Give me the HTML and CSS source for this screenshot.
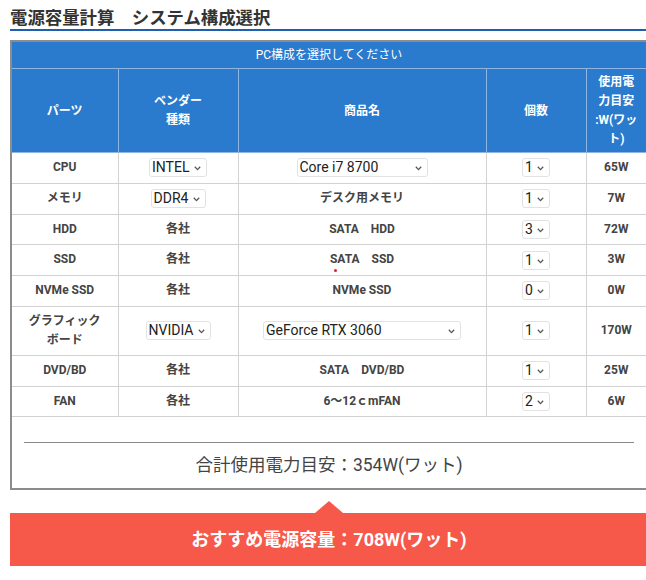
FILE: index.html
```html
<!DOCTYPE html>
<html lang="ja">
<head>
<meta charset="utf-8">
<title>電源容量計算</title>
<link rel="stylesheet" href="styles.css">
</head>
<body>
<div class="page">
  <h2 class="title">電源容量計算　システム構成選択</h2>
  <div class="calc">
    <table class="parts">
      <colgroup>
        <col class="c-part"><col class="c-vendor"><col class="c-name"><col class="c-qty"><col class="c-watt">
      </colgroup>
      <thead>
        <tr><th colspan="5" class="caption-cell">PC構成を選択してください</th></tr>
        <tr class="head">
          <th>パーツ</th>
          <th>ベンダー<br>種類</th>
          <th>商品名</th>
          <th>個数</th>
          <th class="watt-head">使用電<br>力目安<br>:W(ワッ<br>ト)</th>
        </tr>
      </thead>
      <tbody>
        <tr>
          <td>CPU</td>
          <td><span class="sel"><select><option>INTEL</option><option>AMD</option></select><svg width="7" height="5" viewBox="0 0 7 5"><path d="M0.8 0.8L3.5 3.6L6.2 0.8" fill="none" stroke="#555" stroke-width="1.3"/></svg></span></td>
          <td><span class="sel"><select class="w-cpu"><option>Core i7 8700</option><option>Core i5 8400</option></select><svg width="7" height="5" viewBox="0 0 7 5"><path d="M0.8 0.8L3.5 3.6L6.2 0.8" fill="none" stroke="#555" stroke-width="1.3"/></svg></span></td>
          <td><span class="sel"><select><option>1</option><option>2</option></select><svg width="7" height="5" viewBox="0 0 7 5"><path d="M0.8 0.8L3.5 3.6L6.2 0.8" fill="none" stroke="#555" stroke-width="1.3"/></svg></span></td>
          <td>65W</td>
        </tr>
        <tr>
          <td>メモリ</td>
          <td><span class="sel"><select><option>DDR4</option><option>DDR3</option></select><svg width="7" height="5" viewBox="0 0 7 5"><path d="M0.8 0.8L3.5 3.6L6.2 0.8" fill="none" stroke="#555" stroke-width="1.3"/></svg></span></td>
          <td>デスク用メモリ</td>
          <td><span class="sel"><select><option>1</option><option>2</option></select><svg width="7" height="5" viewBox="0 0 7 5"><path d="M0.8 0.8L3.5 3.6L6.2 0.8" fill="none" stroke="#555" stroke-width="1.3"/></svg></span></td>
          <td>7W</td>
        </tr>
        <tr>
          <td>HDD</td>
          <td>各社</td>
          <td>SATA　HDD</td>
          <td><span class="sel"><select><option>3</option><option>1</option></select><svg width="7" height="5" viewBox="0 0 7 5"><path d="M0.8 0.8L3.5 3.6L6.2 0.8" fill="none" stroke="#555" stroke-width="1.3"/></svg></span></td>
          <td>72W</td>
        </tr>
        <tr>
          <td>SSD</td>
          <td>各社</td>
          <td class="dotcell">SATA　SSD<span class="dot"></span></td>
          <td><span class="sel"><select><option>1</option><option>2</option></select><svg width="7" height="5" viewBox="0 0 7 5"><path d="M0.8 0.8L3.5 3.6L6.2 0.8" fill="none" stroke="#555" stroke-width="1.3"/></svg></span></td>
          <td>3W</td>
        </tr>
        <tr>
          <td>NVMe SSD</td>
          <td>各社</td>
          <td>NVMe SSD</td>
          <td><span class="sel"><select><option>0</option><option>1</option></select><svg width="7" height="5" viewBox="0 0 7 5"><path d="M0.8 0.8L3.5 3.6L6.2 0.8" fill="none" stroke="#555" stroke-width="1.3"/></svg></span></td>
          <td>0W</td>
        </tr>
        <tr>
          <td class="two-line">グラフィック<br>ボード</td>
          <td><span class="sel"><select><option>NVIDIA</option><option>AMD</option></select><svg width="7" height="5" viewBox="0 0 7 5"><path d="M0.8 0.8L3.5 3.6L6.2 0.8" fill="none" stroke="#555" stroke-width="1.3"/></svg></span></td>
          <td><span class="sel"><select class="w-gpu"><option>GeForce RTX 3060</option><option>GeForce RTX 3070</option></select><svg width="7" height="5" viewBox="0 0 7 5"><path d="M0.8 0.8L3.5 3.6L6.2 0.8" fill="none" stroke="#555" stroke-width="1.3"/></svg></span></td>
          <td><span class="sel"><select><option>1</option><option>2</option></select><svg width="7" height="5" viewBox="0 0 7 5"><path d="M0.8 0.8L3.5 3.6L6.2 0.8" fill="none" stroke="#555" stroke-width="1.3"/></svg></span></td>
          <td>170W</td>
        </tr>
        <tr>
          <td>DVD/BD</td>
          <td>各社</td>
          <td>SATA　DVD/BD</td>
          <td><span class="sel"><select><option>1</option><option>0</option></select><svg width="7" height="5" viewBox="0 0 7 5"><path d="M0.8 0.8L3.5 3.6L6.2 0.8" fill="none" stroke="#555" stroke-width="1.3"/></svg></span></td>
          <td>25W</td>
        </tr>
        <tr>
          <td>FAN</td>
          <td>各社</td>
          <td>6～12ｃmFAN</td>
          <td><span class="sel"><select><option>2</option><option>1</option></select><svg width="7" height="5" viewBox="0 0 7 5"><path d="M0.8 0.8L3.5 3.6L6.2 0.8" fill="none" stroke="#555" stroke-width="1.3"/></svg></span></td>
          <td>6W</td>
        </tr>
      </tbody>
    </table>
    <div class="total">合計使用電力目安：354W(ワット)</div>
  </div>
  <div class="recommend">おすすめ電源容量：708W(ワット)</div>
</div>
</body>
</html>
```

FILE: styles.css
```css
html, body {
  margin: 0;
  padding: 0;
  overflow: hidden;
  background: #fff;
}

body {
  font-family: Roboto, "Noto Sans CJK JP", sans-serif;
  color: #444;
}

.page {
  width: 638px;
  padding-left: 10px;
}

.title {
  margin: 5px 0 0;
  font: bold 17.4px/24px "Noto Sans CJK JP", sans-serif;
  color: #333;
  border-bottom: 2px solid #1f5fae;
}

.calc {
  margin-top: 9px;
  border: 2px solid #8c8c8c;
}

.parts {
  width: 100%;
  border-collapse: collapse;
  table-layout: fixed;
}

.c-part { width: 106px; }
.c-vendor { width: 120px; }
.c-name { width: 248px; }
.c-qty { width: 100px; }
.c-watt { width: 60px; }

.parts th {
  background: #2a7ace;
  color: #fff;
  font-size: 12px;
  line-height: 19px;
  font-weight: bold;
  border: 1px solid #8fb6e3;
  padding: 4px 6px 3px;
  text-align: center;
}

.parts .caption-cell {
  font-weight: normal;
  padding: 4px 3px 3px;
  border-top: none;
}

.parts th:first-child,
.parts td:first-child {
  border-left: none;
}

.parts th:last-child,
.parts td:last-child {
  border-right: none;
}

.parts td {
  font-size: 12px;
  line-height: 19.75px;
  font-weight: bold;
  text-align: center;
  color: #444;
  border: 1px solid #d2d2d2;
  padding: 5px 4px;
}

.parts td.two-line {
  line-height: 19px;
}

.sel {
  position: relative;
  display: inline-block;
  vertical-align: middle;
  line-height: 0;
}

.sel select {
  -webkit-appearance: none;
  appearance: none;
  box-sizing: border-box;
  height: 19px;
  margin: 0;
  padding: 0 16px 0 2px;
  font: 14px/17px Roboto, sans-serif;
  color: #222;
  background: #fff;
  border: 1px solid #e2e2e2;
  border-radius: 3px;
}

.sel select.w-cpu { width: 131px; }
.sel select.w-gpu { width: 198px; }

.sel svg {
  position: absolute;
  right: 6px;
  top: 8px;
  pointer-events: none;
}

.dotcell {
  position: relative;
}

.dot {
  position: absolute;
  left: 95px;
  top: 24px;
  width: 3px;
  height: 3px;
  border-radius: 50%;
  background: #d0283a;
}

.total {
  margin: 25px 12px 0;
  border-top: 1px solid #888;
  padding: 10px 0;
  text-align: center;
  font-size: 17.5px;
  line-height: 25px;
  color: #444;
}

.recommend {
  position: relative;
  margin-top: 23px;
  background: #f6594a;
  color: #fff;
  text-align: center;
  font-size: 18px;
  line-height: 25px;
  font-weight: bold;
  padding: 14px 0;
}

.recommend::before {
  content: "";
  position: absolute;
  top: -12px;
  left: 50%;
  margin-left: -14px;
  border-left: 14px solid transparent;
  border-right: 14px solid transparent;
  border-bottom: 12px solid #f6594a;
}
```
